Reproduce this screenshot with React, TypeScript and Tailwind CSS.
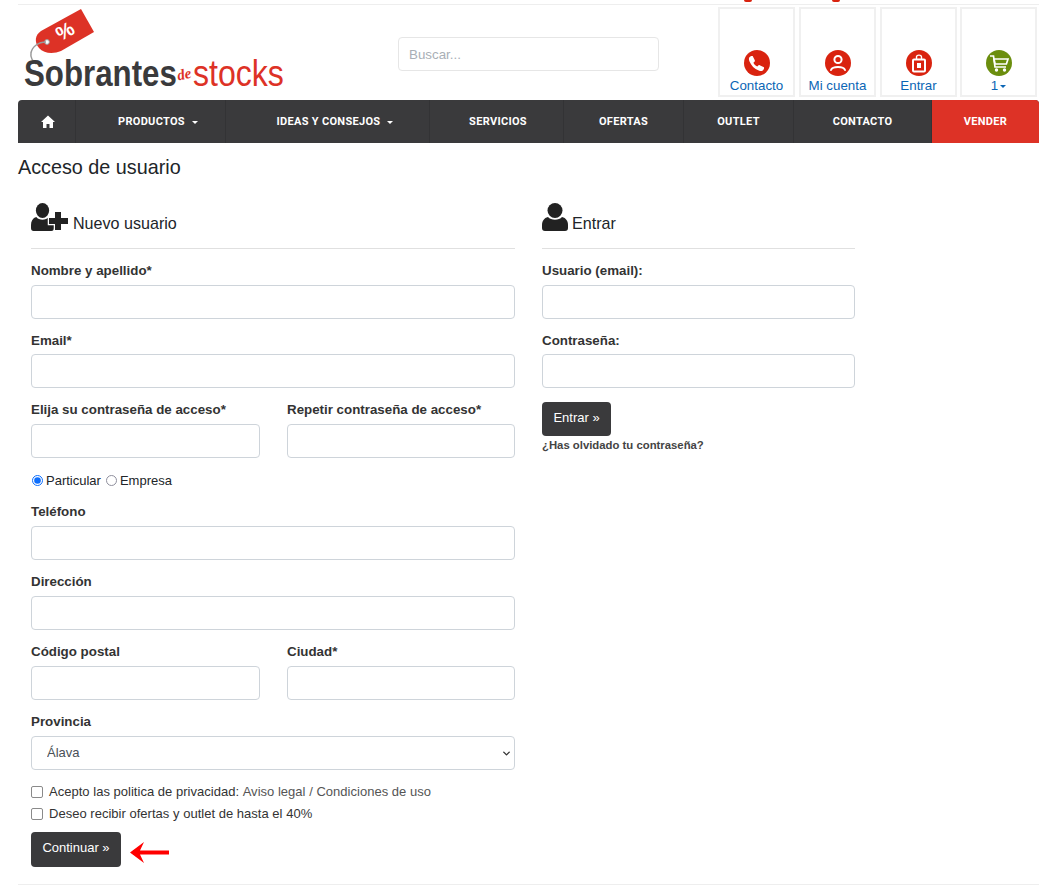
import { ChevronDown } from "lucide-react";

const font = "font-['Liberation_Sans',Arial,sans-serif]";
const inputClass =
  "block h-[34px] w-full rounded-[4px] border border-[#ced4da] bg-white px-3 text-[13px] text-[#495057]";
const labelClass = "mb-[3.6px] block text-[13.33px] font-bold leading-[21px] text-[#333]";
const checkClass = "ml-0 mr-[6px] h-[12px] w-[12px] appearance-none rounded-[2px] border border-[#8a8a8a] bg-white";

const navItems = [
  { label: "PRODUCTOS", width: "w-[150px] pl-[15px]", caret: true },
  { label: "IDEAS Y CONSEJOS", width: "w-[204px] pl-[15px]", caret: true },
  { label: "SERVICIOS", width: "w-[134px] pl-[3px]" },
  { label: "OFERTAS", width: "w-[120px]" },
  { label: "OUTLET", width: "w-[110px]" },
  { label: "CONTACTO", width: "w-[138px]" },
];

function Logo() {
  return (
    <div className="relative h-[84px] w-[270px]">
      <svg className="absolute left-0 top-0" width="90" height="70" viewBox="0 0 90 70">
        <path
          d="M57 2 L70 25 L37 44 C30 47 20 47 15 41 C10 35 11 28 17 24 Z"
          fill="#dd3226"
        />
        <circle cx="23" cy="35" r="2.4" fill="#fff" stroke="#999" strokeWidth="1" />
        <path d="M22 35 C14 35 8 40 7 46 C6 51 9 54 12 57" fill="none" stroke="#9a9a9a" strokeWidth="1.5" />
      </svg>
      <span className="absolute left-[32px] top-[14px] rotate-[-30deg] text-[20px] font-bold leading-none text-white">
        %
      </span>
      <div className="absolute bottom-[-10px] left-0 flex items-baseline whitespace-nowrap text-[37px] leading-[40px]">
        <span className="inline-block w-[153px] origin-left scale-x-[0.845] font-bold text-[#3a3a3c]">Sobrantes</span>
        <span className="inline-block w-[16px] -translate-y-[7px] -rotate-12 font-['Liberation_Serif',serif] text-[15px] font-bold italic text-[#dd3226]">
          de
        </span>
        <span className="inline-block w-[91px] origin-left scale-x-[0.867] text-[#dd3226]">stocks</span>
      </div>
    </div>
  );
}

function HeaderTile({ label, color, children }: { label: React.ReactNode; color: string; children: React.ReactNode }) {
  return (
    <a className="flex h-[90px] w-[77px] flex-col items-center justify-end border-2 border-[#f0f0f0] text-[13.33px] leading-[19px] text-[#0b66b5] last:-ml-px">
      <span className={`flex h-[26px] w-[26px] items-center justify-center rounded-full ${color}`}>{children}</span>
      {label}
    </a>
  );
}

function PersonIcon({ className, width = 26 }: { className?: string; width?: number }) {
  return (
    <svg className={className} width={width} height="28" viewBox="0 0 26 28" fill="#222" preserveAspectRatio="none">
      <circle cx="13" cy="7.5" r="7.5" />
      <path d="M6 14 C9 17.5 17 17.5 20 14 C24 15 26 18 26 22 L26 25 C26 27 25 28 23 28 L3 28 C1 28 0 27 0 25 L0 22 C0 18 2 15 6 14 Z" />
    </svg>
  );
}

function Field({ label, className }: { label: string; className?: string }) {
  return (
    <div className={className ?? "mb-[10.8px]"}>
      <label className={labelClass}>{label}</label>
      <input className={inputClass} />
    </div>
  );
}

export default function App() {
  return (
    <div className={`${font} h-[885px] w-[1056px] overflow-hidden bg-white text-[13px] text-[#212529]`}>
      <div className="mx-[18px] w-[1021px]">
        {/* top strip, the previous page bar is cut off here */}
        <div className="flex h-[5px] items-start border-b border-[#eeeeee]">
          <span className="ml-[726px] h-[2px] w-[8px] rounded-b-full bg-[#d9230f]" />
          <span className="ml-[80px] h-[2px] w-[8px] rounded-b-full bg-[#d9230f]" />
        </div>

        <header className="flex h-[95px] items-start">
          <div className="ml-[6px] mt-[2px] w-[374px]">
            <Logo />
          </div>
          <input
            placeholder="Buscar..."
            className="mt-[32px] h-[34px] w-[261px] rounded-[4px] border border-[#e6e6e6] px-[10px] text-[13.33px] placeholder:text-[#a9afb6]"
          />
          <div className="ml-[59px] mt-[2px] flex gap-[4px]">
            <HeaderTile label="Contacto" color="bg-[#d9230f]">
              <svg width="17" height="17" viewBox="0 0 24 24" fill="#fff">
                <path d="M6.6 1.5 L9.6 7.5 C9.9 8.2 9.7 8.9 9.2 9.4 L7.6 11 C8.8 13.4 10.6 15.2 13 16.4 L14.6 14.8 C15.1 14.3 15.8 14.1 16.5 14.4 L22.5 17.4 C23 18.6 22.3 20.6 20.8 22 C19.6 23 17.6 23 15.2 22 C8.8 19.4 4.6 15.2 2 8.8 C1 6.4 1 4.4 2 3.2 C3.4 1.7 5.4 1 6.6 1.5 Z" />
              </svg>
            </HeaderTile>
            <HeaderTile label="Mi cuenta" color="bg-[#d9230f]">
              <svg width="20" height="20" viewBox="0 0 20 20" fill="none" stroke="#fff" strokeWidth="2">
                <circle cx="10" cy="6.5" r="3.6" />
                <path d="M3 17 C4.5 13 15.5 13 17 17" strokeLinecap="round" />
              </svg>
            </HeaderTile>
            <HeaderTile label="Entrar" color="bg-[#d9230f]">
              <svg width="18" height="20" viewBox="0 0 18 20" fill="none">
                <rect x="3" y="6.5" width="12" height="12" rx="1" stroke="#fff" strokeWidth="2" />
                <path d="M6.5 6.5 V4 C6.5 1.5 11.5 1.5 11.5 4 V6.5" stroke="#fff" strokeWidth="1.4" />
                <rect x="7" y="10" width="4" height="5" fill="#fff" />
              </svg>
            </HeaderTile>
            <HeaderTile
              label={
                <span className="flex items-center">
                  1<span className="ml-[2px] mt-[2px] border-x-[3px] border-t-[3px] border-x-transparent border-t-[#0b66b5]" />
                </span>
              }
              color="bg-[#6b8e0e]"
            >
              <svg width="22" height="20" viewBox="0 0 22 20" fill="none">
                <path d="M2 3 H5.5 L7 14 H18" stroke="#fff" strokeWidth="1.7" />
                <path d="M6 6 H20 L18.4 11 H7 Z" stroke="#fff" strokeWidth="1.7" />
                <circle cx="8.5" cy="17" r="1.7" fill="#fff" />
                <circle cx="16.5" cy="17" r="1.7" fill="#fff" />
              </svg>
            </HeaderTile>
          </div>
        </header>

        <nav className="flex h-[43px] overflow-hidden rounded-t-[4px] bg-[#3a3a3c] font-['Roboto',sans-serif] text-[11px] font-bold tracking-[0.3px] text-white">
          <a className="flex w-[58px] items-center justify-center border-r border-[#333335] pl-[2px]">
            <svg width="14" height="13" viewBox="0 0 14 13" fill="#fff">
              <path d="M7 0.5 L14 7 L12 7 L12 13 L8.5 13 L8.5 9 L5.5 9 L5.5 13 L2 13 L2 7 L0 7 Z" />
            </svg>
          </a>
          {navItems.map((item) => (
            <a key={item.label} className={`flex items-center justify-center border-r border-[#333335] pt-[2px] ${item.width}`}>
              {item.label}
              {item.caret && (
                <span className="ml-[7px] border-x-[3px] border-t-[3px] border-x-transparent border-t-white" />
              )}
            </a>
          ))}
          <a className="flex flex-1 items-center justify-center bg-[#dd3226] pt-[2px]">VENDER</a>
        </nav>

        <h1 className="mt-[11px] text-[19.8px] font-normal leading-[26px]">Acceso de usuario</h1>

        <main className="mt-[23px] flex items-start pl-[13px]">
          <section className="w-[484px]">
            <h2 className="flex h-[36px] items-start gap-[4px] text-[16.1px] font-normal leading-[24px]">
              <span className="relative h-[28px] w-[38px] shrink-0">
                <PersonIcon className="absolute left-0 top-0" width={23} />
                <svg
                  className="absolute bottom-0 left-[16px]"
                  width="22"
                  height="20"
                  viewBox="-1 -1 22 20"
                  fill="#222"
                  stroke="#fff"
                  strokeWidth="2.5"
                  paintOrder="stroke"
                >
                  <path d="M7 0 H13 V6 H20 V12 H13 V18 H7 V12 H1 V6 H7 Z" />
                </svg>
              </span>
              <span className="mt-[8px]">Nuevo usuario</span>
            </h2>
            <div className="mb-[11.4px] mt-[9px] border-b border-[#e0e0e0]" />

            <Field label="Nombre y apellido*" />
            <Field label="Email*" />
            <div className="flex gap-[27px]">
              <Field label="Elija su contraseña de acceso*" className="mb-[12px] w-[229px] shrink-0" />
              <Field label="Repetir contraseña de acceso*" className="mb-[12px] flex-1" />
            </div>
            <div className="mb-[10.4px] flex h-[21px] items-center">
              <input type="radio" name="tipo" defaultChecked className="ml-[1px] mr-[3px] h-[11px] w-[11px] accent-[#0d6efd]" />
              <span>Particular</span>
              <input
                type="radio"
                name="tipo"
                className="ml-[5px] mr-[3px] h-[11px] w-[11px] appearance-none rounded-full border border-[#8f8f9d] bg-white"
              />
              <span>Empresa</span>
            </div>
            <Field label="Teléfono" className="mb-[11.4px]" />
            <Field label="Dirección" className="mb-[11.4px]" />
            <div className="flex gap-[27px]">
              <Field label="Código postal" className="mb-[11.4px] w-[229px] shrink-0" />
              <Field label="Ciudad*" className="mb-[11.4px] flex-1" />
            </div>
            <div className="mb-[11px]">
              <label className={labelClass}>Provincia</label>
              <div className="relative">
                <select className={`${inputClass} appearance-none pl-[15px] text-[#444]`}>
                  <option>Álava</option>
                </select>
                <ChevronDown className="pointer-events-none absolute right-[3px] top-[12px] h-[11px] w-[11px] text-[#333]" strokeWidth={3} />
              </div>
            </div>
            <div className="flex h-[22px] items-center tracking-[0.02px] text-[#333]">
              <input type="checkbox" className={checkClass} />
              Acepto las politica de privacidad:&nbsp;<span className="text-[#555]">Aviso legal / Condiciones de uso</span>
            </div>
            <div className="flex h-[22px] items-center tracking-[0.02px] text-[#333]">
              <input type="checkbox" className={checkClass} />
              Deseo recibir ofertas y outlet de hasta el 40%
            </div>
            <div className="mt-[7px] flex items-center gap-[9px]">
              <button className="h-[35px] w-[90px] rounded-[4px] bg-[#3a3a3c] pb-[2px] text-[13px] text-white">Continuar »</button>
              <svg className="mt-[6px]" width="40" height="21" viewBox="0 0 40 21">
                <path d="M0 10.5 L14 0 L10 8.5 H39 V12.5 H10 L14 21 Z" fill="#f00" />
              </svg>
            </div>
          </section>

          <section className="ml-[27px] w-[313px]">
            <h2 className="flex h-[36px] items-start gap-[4px] text-[16.1px] font-normal leading-[24px]">
              <PersonIcon className="shrink-0" />
              <span className="mt-[8px]">Entrar</span>
            </h2>
            <div className="mb-[11.4px] mt-[9px] border-b border-[#e0e0e0]" />
            <Field label="Usuario (email):" />
            <Field label="Contraseña:" />
            <button className="mt-[3px] h-[34px] w-[69px] rounded-[4px] bg-[#3a3a3c] pb-[2px] text-[13px] text-white">Entrar »</button>
            <a className="mt-[1px] block text-[11.33px] font-bold leading-[16px] text-[#444]">¿Has olvidado tu contraseña?</a>
          </section>
        </main>

        <div className="mt-[17px] border-t border-[#eeeeee]" />
      </div>
    </div>
  );
}
